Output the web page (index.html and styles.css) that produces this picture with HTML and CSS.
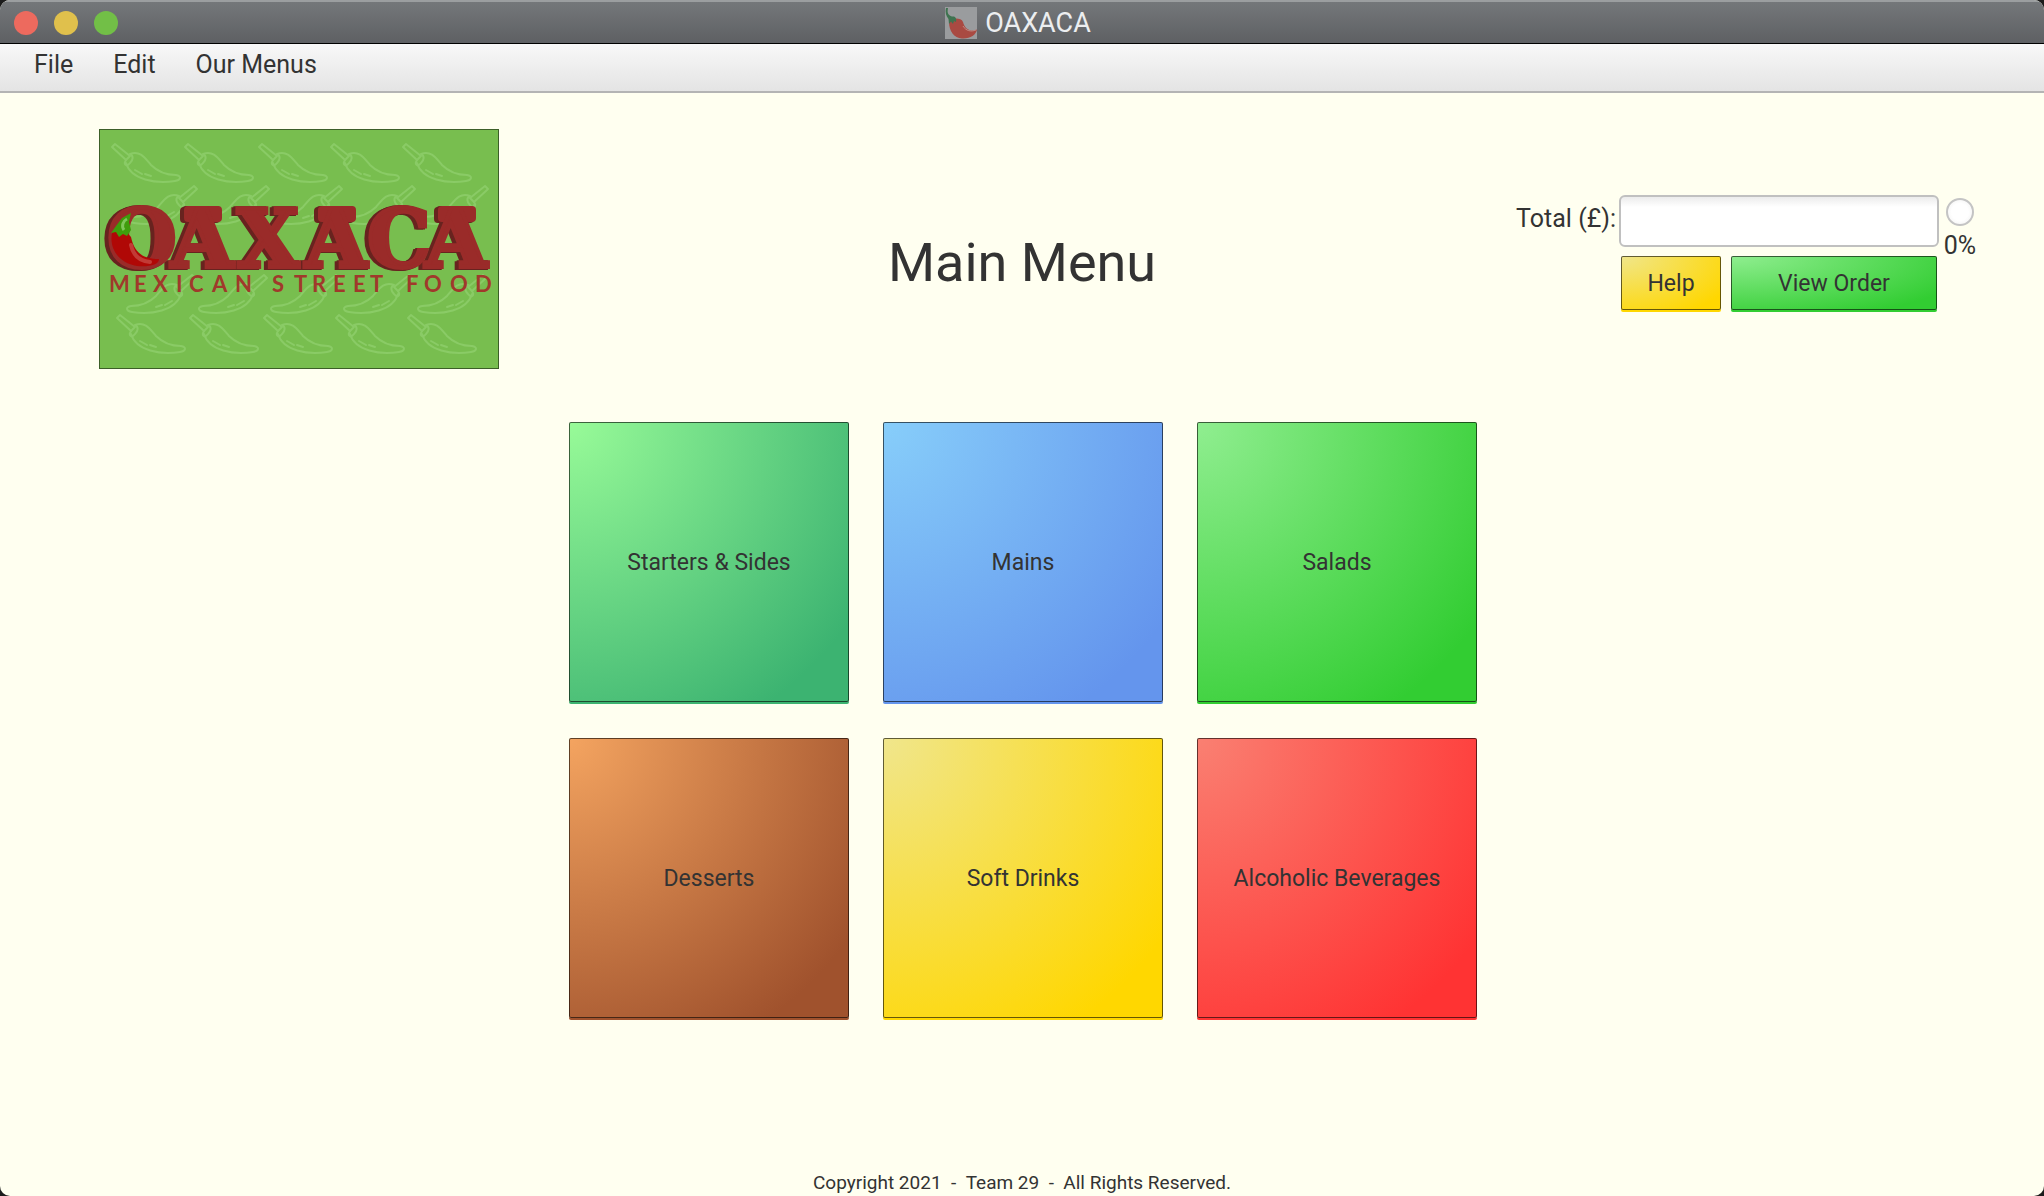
FILE: index.html
```html
<!DOCTYPE html>
<html lang="en">
<head>
<meta charset="utf-8">
<title>OAXACA</title>
<link rel="stylesheet" href="styles.css">
</head>
<body>
<div class="window">
  <header class="titlebar">
    <div class="lights">
      <button class="light light-close" aria-label="Close"></button>
      <button class="light light-min" aria-label="Minimise"></button>
      <button class="light light-max" aria-label="Zoom"></button>
    </div>
    <div class="window-title">
      <svg class="app-icon" viewBox="0 0 32 32" aria-hidden="true">
        <rect width="32" height="32" fill="#9a9c9e"/>
        <path d="M4 15C5 11 16 10 18 15C20 23 26 25 32 22.500C31 28 25 32 17 31.500C9 31 4 24 4 15Z" fill="#a94a42"/>
        <path d="M18 19C21 24 26 25 31 23" fill="none" stroke="#c08a84" stroke-width="1"/>
        <path d="M1 1L3 1C2 6 3 8 7 9.500C10 9 12 11 11 15L9 14L8 17L6 14.500L4 17L3.500 12C1 9 0 5 1 1Z" fill="#3f7350"/>
      </svg>
      <span>OAXACA</span>
    </div>
  </header>

  <nav class="menubar">
    <button class="menu-item">File</button>
    <button class="menu-item">Edit</button>
    <button class="menu-item">Our Menus</button>
  </nav>

  <main class="content">
    <section class="top">
      <svg class="logo" viewBox="0 0 400 240" role="img" aria-label="Oaxaca Mexican Street Food">
        <defs>
          <g id="chili" fill="none" stroke="#8acb66" stroke-width="2" stroke-linejoin="round" stroke-linecap="round">
            <path d="M1 3L4 0L19 12L15 16Z"/>
            <path d="M15 16C12 21 16 23 19 19C22 16 23 12 19 10M19 10C29 6 34 14 40 21C47 28 56 31 65 31C71 32 70 36 64 37C45 40 20 36 15 19"/>
            <path d="M24 26L31 30M34 30L40 32"/>
          </g>
        </defs>
        <rect x="0.500" y="0.500" width="399" height="239" fill="#78be4f" stroke="#3c5f28"/>
        <use href="#chili" x="12" y="15"/><use href="#chili" x="85" y="15"/><use href="#chili" x="159" y="15"/><use href="#chili" x="231" y="15"/><use href="#chili" x="303" y="15"/>
        <g transform="scale(-1 1)">
          <use href="#chili" x="-99" y="57"/><use href="#chili" x="-171" y="57"/><use href="#chili" x="-244" y="57"/><use href="#chili" x="-317" y="57"/><use href="#chili" x="-390" y="57"/>
          <use href="#chili" x="-97" y="146"/><use href="#chili" x="-169" y="146"/><use href="#chili" x="-241" y="146"/><use href="#chili" x="-314" y="146"/><use href="#chili" x="-388" y="146"/>
        </g>
        <use href="#chili" x="17" y="186"/><use href="#chili" x="90" y="186"/><use href="#chili" x="164" y="186"/><use href="#chili" x="236" y="186"/><use href="#chili" x="308" y="186"/>
        <g class="wordmark">
          <rect x="87" y="79" width="34" height="12" rx="2"/>
          <rect x="221" y="79" width="34" height="12" rx="2"/>
          <rect x="341" y="79" width="34" height="12" rx="2"/>
          <text x="8 72 138 206 268 326" y="138">OAXACA</text>
        </g>
        <path d="M13 104C18 98 27 101 32 108C35 122 42 130 60 130C60 136 50 138 38 137C20 134 10 120 13 104Z" fill="#b00806"/>
        <path d="M32 116C34 126 40 132 51 133" fill="none" stroke="#c23b36" stroke-width="4" stroke-linecap="round"/>
        <path d="M32 84L23 89L17 97L12 104L17 103L20 108L24 105L28 107L32 101L30 93Z" fill="#3f9c0c"/>
        <path d="M28 90C24 92 22 97 25 101" fill="none" stroke="#7fc65a" stroke-width="3"/>
        <text class="tagline" x="10 35 54 77 90 113 136 173 195 213 234 254 271 307 325 351 376" y="163">MEXICANSTREETFOOD</text>
      </svg>

      <h1 class="heading">Main Menu</h1>

      <div class="order">
        <label class="total-label" for="total">Total (£):</label>
        <input class="total-field" id="total" type="text" readonly>
        <div class="progress">
          <input class="progress-dot" id="progress" type="radio">
          <label for="progress">0%</label>
        </div>
        <div class="order-actions">
          <button class="btn btn-help gold">Help</button>
          <button class="btn btn-order lime">View Order</button>
        </div>
      </div>
    </section>

    <section class="tiles">
      <button class="btn tile sea">Starters &amp; Sides</button>
      <button class="btn tile blue">Mains</button>
      <button class="btn tile lime">Salads</button>
      <button class="btn tile brown">Desserts</button>
      <button class="btn tile gold">Soft Drinks</button>
      <button class="btn tile red">Alcoholic Beverages</button>
    </section>
  </main>

  <footer class="footer">Copyright 2021 &nbsp;- &nbsp;Team 29 &nbsp;- &nbsp;All Rights Reserved.</footer>
</div>
</body>
</html>
```
FILE: styles.css
```css
* { box-sizing: border-box; }

body {
  margin: 0;
  background: #1c1c1c;
  color: #333;
  font-family: Roboto, "Liberation Sans", sans-serif;
  font-size: 25px;
}

button, input { font: inherit; color: inherit; margin: 0; padding: 0; }

.window {
  min-height: 100vh;
  display: flex;
  flex-direction: column;
  background: #fffff0;
  border-radius: 10px;
  overflow: hidden;
}

.titlebar {
  display: grid;
  grid-template-columns: 1fr auto 1fr;
  align-items: center;
  height: 44px;
  padding: 0 22px 0 14px;
  background: linear-gradient(#74777a, #5e6063);
  border-top: 2px solid #9b9ea0;
  border-bottom: 1px solid #000;
}
.lights { display: flex; gap: 16px; }
.light { width: 24px; height: 24px; border: 0; border-radius: 50%; }
.light-close { background: #ed6a5e; }
.light-min { background: #e0c04c; }
.light-max { background: #72bf47; }
.window-title { display: flex; align-items: center; gap: 8px; color: #eceef0; font-size: 27px; }
.app-icon { width: 32px; height: 32px; }

.menubar {
  display: flex;
  gap: 40px;
  height: 49px;
  padding: 0 34px 6px;
  background: linear-gradient(#f8f8f8, #e4e4e4);
  border-bottom: 2px solid #b4b4b4;
}
.menu-item { border: 0; background: none; }

.content { flex: 1; }

.top {
  display: grid;
  grid-template-columns: 1fr auto 1fr;
  padding: 36px 66px 0;
}
.logo { width: 400px; height: 240px; margin-left: 33px; }
.wordmark {
  font-family: "DejaVu Serif", serif;
  font-weight: 700;
  font-size: 80px;
  fill: #9a2b29;
  stroke: #9a2b29;
  stroke-width: 4px;
  filter: drop-shadow(-2px 0 0 #68231f) drop-shadow(-2px 1px 0 #68231f);
}
.tagline { font-family: Lato, sans-serif; font-weight: 700; font-size: 22px; fill: #a0392b; }

.heading { margin: 0; padding-top: 100px; font-size: 54px; line-height: 68px; font-weight: 400; }

.order {
  justify-self: end;
  display: grid;
  grid-template-columns: auto 320px 36px;
  column-gap: 3px;
  row-gap: 9px;
  align-content: start;
  padding-top: 66px;
}
.total-label { line-height: 48px; }
.total-field {
  height: 52px;
  border: 2px solid #c0c0c0;
  border-radius: 6px;
  background: linear-gradient(#ececec, #fff 10px);
}
.progress { display: flex; flex-direction: column; align-items: center; gap: 6px; height: 52px; padding-top: 3px; line-height: 28px; }
.progress-dot {
  appearance: none;
  flex: none;
  width: 28px;
  height: 28px;
  border: 2px solid #c4c4c4;
  border-radius: 50%;
  background: radial-gradient(#fff 50%, #eee);
}
.order-actions { grid-column: 2; display: flex; gap: 10px; padding: 0 2px; }

.btn {
  border: 1px solid rgba(0, 0, 0, 0.6);
  border-radius: 2px;
  font-size: 23px;
  background: radial-gradient(ellipse 123% 123% at 0 0, var(--from), var(--to)) border-box;
  box-shadow: 0 2px 0 -1px var(--to), 0 2px 0 var(--to);
}
.btn-help { width: 100px; height: 54px; }
.btn-order { flex: 1; height: 54px; }

.sea { --from: #98fb98; --to: #3cb371; }
.blue { --from: #87cefa; --to: #6495ed; }
.lime { --from: #90ee90; --to: #32cd32; }
.brown { --from: #f4a460; --to: #a0522d; }
.gold { --from: #f0e68c; --to: #ffd700; }
.red { --from: #fa8072; --to: #ff3333; }

.tiles {
  display: grid;
  grid-template-columns: repeat(3, 280px);
  grid-auto-rows: 280px;
  justify-content: center;
  gap: 36px 34px;
  padding: 53px 0 0 2px;
}

.footer { padding-bottom: 1px; font-size: 19px; line-height: 24px; text-align: center; }
```
